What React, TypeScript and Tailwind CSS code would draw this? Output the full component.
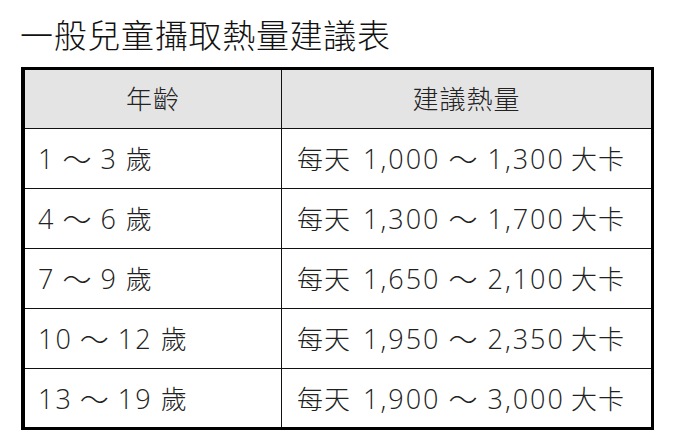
const rows = [
  { from: '1', to: '3', min: '1,000', max: '1,300' },
  { from: '4', to: '6', min: '1,300', max: '1,700' },
  { from: '7', to: '9', min: '1,650', max: '2,100' },
  { from: '10', to: '12', min: '1,950', max: '2,350' },
  { from: '13', to: '19', min: '1,900', max: '3,000' }
]

const font = { fontFamily: '"Open Sans", "Noto Sans CJK TC", sans-serif' }

function Num({ children }: { children: string }) {
  return <span className="text-[27px] tracking-[2px] -mr-[2px]">{children}</span>
}

function Tilde() {
  return <span className="text-[29px] leading-none mx-[2px]">～</span>
}

export default function App() {
  return (
    <div className="w-[684px] h-[447px] bg-white overflow-hidden" style={font}>
      <h1 className="pl-[20px] pt-[16px] h-[40px] leading-[40px] text-[33px] tracking-[0.7px] font-light text-[#111] mb-[11px] box-content">
        一般兒童攝取熱量建議表
      </h1>

      <div className="ml-[21px] w-[633px] border-[3px] border-l-4 border-black text-[26px] text-[#222] font-light">
        <div className="grid grid-cols-[256px_1fr] h-[58px] bg-[#e4e4e4] tracking-[1px]">
          <div className="flex items-center justify-center">年齡</div>
          <div className="flex items-center justify-center border-l border-[#111]">建議熱量</div>
        </div>

        {rows.map((r, i) => (
          <div
            key={r.from}
            className={`grid grid-cols-[256px_1fr] border-t border-[#111] ${i === rows.length - 1 ? 'h-[59px]' : 'h-[60px]'}`}
          >
            <div className="flex items-center gap-[7px] pl-[13px] pt-[2px]">
              <Num>{r.from}</Num>
              <Tilde />
              <Num>{r.to}</Num>
              <span className="ml-[3px]">歲</span>
            </div>
            <div className="flex items-center gap-[8px] pl-[15px] pt-[2px] border-l border-[#111]">
              <span className="tracking-[1px] mr-[4px]">每天</span>
              <Num>{r.min}</Num>
              <Tilde />
              <Num>{r.max}</Num>
              <span className="tracking-[1px]">大卡</span>
            </div>
          </div>
        ))}
      </div>
    </div>
  )
}
